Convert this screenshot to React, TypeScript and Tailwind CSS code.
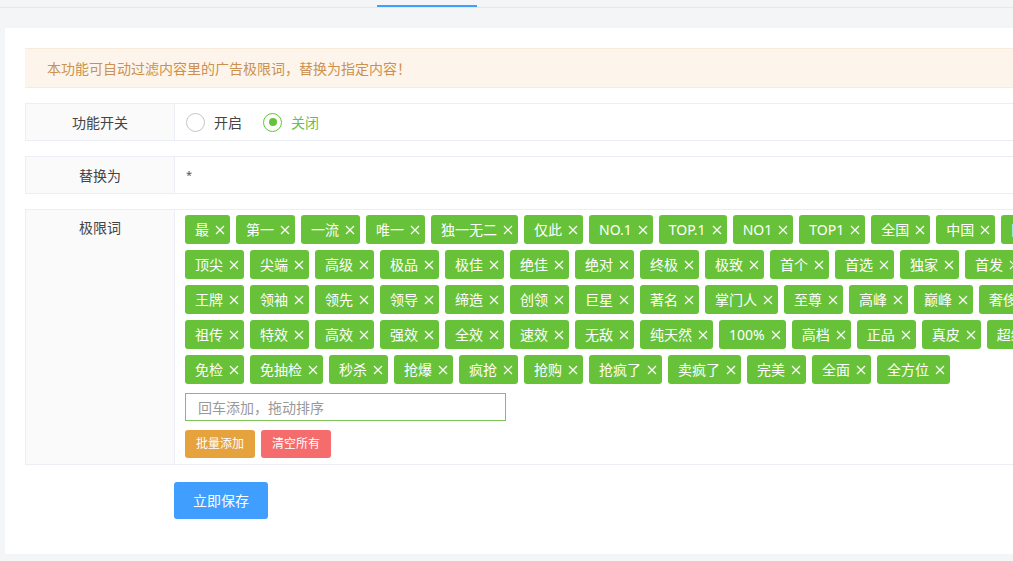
import { useState } from "react";

const tagRows: string[][] = [
  ["最", "第一", "一流", "唯一", "独一无二", "仅此", "NO.1", "TOP.1", "NO1", "TOP1", "全国", "中国", "国家级", "世界级"],
  ["顶尖", "尖端", "高级", "极品", "极佳", "绝佳", "绝对", "终极", "极致", "首个", "首选", "独家", "首发", "首款"],
  ["王牌", "领袖", "领先", "领导", "缔造", "创领", "巨星", "著名", "掌门人", "至尊", "高峰", "巅峰", "奢侈", "顶级"],
  ["祖传", "特效", "高效", "强效", "全效", "速效", "无敌", "纯天然", "100%", "高档", "正品", "真皮", "超级", "极致"],
  ["免检", "免抽检", "秒杀", "抢爆", "疯抢", "抢购", "抢疯了", "卖疯了", "完美", "全面", "全方位"],
];

// small close icon used inside each tag
const CloseIcon = () => (
  <svg width="10" height="10" viewBox="0 0 10 10" className="ml-[6px] shrink-0">
    <path d="M1 1 L9 9 M9 1 L1 9" stroke="#ffffff" strokeWidth="1.2" fill="none" />
  </svg>
);

const Radio = ({ checked, label, onClick }: { checked: boolean; label: string; onClick: () => void }) => (
  <label className="flex items-center cursor-pointer" onClick={onClick}>
    <span
      className={
        checked
          ? "w-[19px] h-[19px] rounded-full border border-[#67c23a] bg-white flex items-center justify-center"
          : "w-[19px] h-[19px] rounded-full border border-[#c6c6c6] bg-white flex items-center justify-center"
      }
    >
      {checked && <span className="w-[8px] h-[8px] rounded-full bg-[#67c23a]" />}
    </span>
    <span className={checked ? "ml-[9px] text-[14px] text-[#6cbf48]" : "ml-[9px] text-[14px] text-[#444]"}>{label}</span>
  </label>
);

export default function App() {
  const [enabled, setEnabled] = useState<boolean>(false);
  const [rows] = useState<string[][]>(tagRows);

  return (
    <div className="w-[1013px] h-[561px] overflow-hidden bg-[#f4f5f7] font-['Noto_Sans','Noto_Sans_CJK_SC',sans-serif]">
      {/* tab bar (cut off at the top) */}
      <div className="h-[8px] border-b border-[#e4e7ed] flex items-end">
        <div className="ml-[377px] w-[100px] h-[2px] bg-[#409eff]" />
      </div>

      <div className="mt-[20px] ml-[5px] w-[1200px] bg-white pt-[20px] pb-[35px] pl-[20px]">
        <div className="h-[40px] bg-[#fdf5eb] border-y border-[#f9ebd9] flex items-center pl-[22px] text-[14px] text-[#cc9150]">
          本功能可自动过滤内容里的广告极限词，替换为指定内容！
        </div>

        {/* 功能开关 */}
        <div className="mt-[15px] flex border border-[#ebeef5] h-[38px]">
          <div className="w-[149px] shrink-0 bg-[#fafafa] border-r border-[#ebeef5] flex items-center justify-center text-[14px] text-[#444]">
            功能开关
          </div>
          <div className="flex items-center pl-[11px] gap-[21px]">
            <Radio checked={enabled} label="开启" onClick={() => setEnabled(true)} />
            <Radio checked={!enabled} label="关闭" onClick={() => setEnabled(false)} />
          </div>
        </div>

        {/* 替换为 */}
        <div className="mt-[15px] flex border border-[#ebeef5] h-[38px]">
          <div className="w-[149px] shrink-0 bg-[#fafafa] border-r border-[#ebeef5] flex items-center justify-center text-[14px] text-[#444]">
            替换为
          </div>
          <div className="flex items-center pl-[11px] text-[11px] text-[#555]">*</div>
        </div>

        {/* 极限词 */}
        <div className="mt-[15px] flex border border-[#ebeef5]">
          <div className="w-[149px] shrink-0 bg-[#fafafa] border-r border-[#ebeef5] flex justify-center pt-[8px] text-[14px] leading-[20px] text-[#444]">
            极限词
          </div>
          <div className="pl-[10px] pt-[5px] pb-[6px]">
            <div className="flex flex-col gap-[6px]">
              {rows.map((row, i) => (
                <div key={i} className="flex gap-[6px] whitespace-nowrap">
                  {row.map((word, j) => (
                    <span
                      key={j}
                      className="h-[29px] flex items-center pl-[10px] pr-[5px] rounded-[3px] bg-[#67c23a] text-white text-[14px] leading-none shrink-0"
                    >
                      {word}
                      <CloseIcon />
                    </span>
                  ))}
                </div>
              ))}
            </div>
            <input
              className="mt-[9px] block w-[321px] h-[28px] border border-[#7dc45a] px-[12px] text-[14px] outline-none placeholder:text-[#999]"
              placeholder="回车添加，拖动排序"
            />
            <div className="mt-[9px] flex gap-[6px]">
              <button className="w-[70px] h-[28px] rounded-[3px] bg-[#e6a23c] text-white text-[12px]">批量添加</button>
              <button className="w-[70px] h-[28px] rounded-[3px] bg-[#f56c6c] text-white text-[12px]">清空所有</button>
            </div>
          </div>
        </div>

        <button className="mt-[17px] ml-[149px] w-[94px] h-[37px] rounded-[3px] bg-[#409eff] text-white text-[14px]">
          立即保存
        </button>
      </div>
    </div>
  );
}
